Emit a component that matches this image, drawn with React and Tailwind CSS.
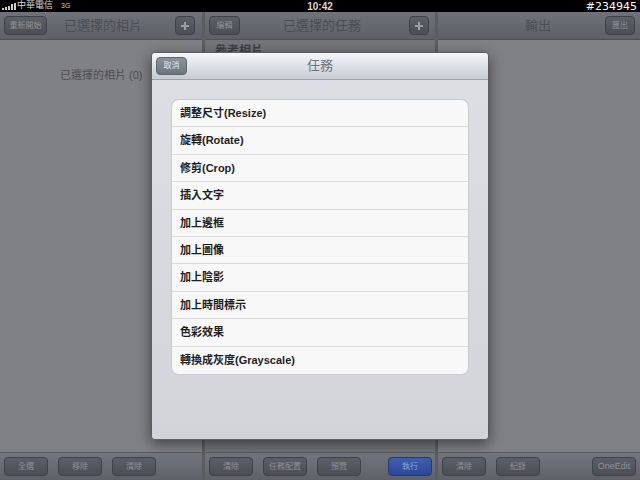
const font = { fontFamily: '"Liberation Sans", "Noto Sans CJK TC", sans-serif' };

function BarButton({ children, className = '', blue = false }) {
  const skin = blue
    ? 'border-[#25397a] bg-gradient-to-b from-[#3f5fb0] to-[#2a4896] text-[#92a3d0]'
    : 'border-[#3f4248] bg-gradient-to-b from-[#5c5f66] to-[#4b4e55] text-[#8e9198]';
  return (
    <div className={'flex h-[19px] items-center justify-center rounded-[4px] border text-[8px] ' + skin + ' ' + className}>
      {children}
    </div>
  );
}

function NavBar({ children }) {
  return (
    <div className="relative flex h-[28px] items-center border-b border-[#4d5056] bg-gradient-to-b from-[#6f7278] to-[#5d6066] px-[4px]">
      {children}
    </div>
  );
}

function ToolBar({ children }) {
  return (
    <div className="flex h-[28px] items-center gap-[10px] border-t border-[#5a5c61] bg-gradient-to-b from-[#73767c] to-[#5e6167] px-[4px]">
      {children}
    </div>
  );
}

function Plus() {
  return (
    <div className="flex h-[19px] w-[20px] items-center justify-center rounded-[4px] border border-[#3f4248] bg-gradient-to-b from-[#5c5f66] to-[#4b4e55]">
      <svg width="10" height="10" viewBox="0 0 10 10">
        <path d="M5 1v8M1 5h8" stroke="#9a9da3" strokeWidth="2" />
      </svg>
    </div>
  );
}

const tasks = [
  '調整尺寸(Resize)',
  '旋轉(Rotate)',
  '修剪(Crop)',
  '插入文字',
  '加上邊框',
  '加上圖像',
  '加上陰影',
  '加上時間標示',
  '色彩效果',
  '轉換成灰度(Grayscale)',
];

export default function App() {
  return (
    <div className="relative flex h-[480px] w-[640px] flex-col overflow-hidden bg-[#7f8084]" style={font}>
      {/* status bar */}
      <div className="relative flex h-[12px] items-center bg-black px-[2px] text-[9px] text-[#d8d8d8]">
        <div className="flex items-end gap-[1px]">
          <div className="h-[2px] w-[2px] bg-[#cfcfcf]" />
          <div className="h-[3px] w-[2px] bg-[#cfcfcf]" />
          <div className="h-[4px] w-[2px] bg-[#cfcfcf]" />
          <div className="h-[6px] w-[2px] bg-[#cfcfcf]" />
          <div className="h-[7px] w-[2px] bg-[#cfcfcf]" />
        </div>
        <span className="ml-[1px]">中華電信</span>
        <span className="ml-[8px] text-[7px] text-[#cfcfcf]">3G</span>
        <span className="absolute left-1/2 -translate-x-1/2 text-[10px] font-bold">10:42</span>
        <span className="absolute right-[3px] top-[-1px] text-[11px] text-white" style={{ fontFamily: '"DejaVu Sans", sans-serif' }}>
          #234945
        </span>
      </div>

      <div className="flex flex-1">
        {/* column 1 */}
        <div className="flex w-[202px] flex-col">
          <NavBar>
            <BarButton className="w-[43px]">重新開始</BarButton>
            <span className="ml-[17px] text-[13px] text-[#4b4e54]">已選擇的相片</span>
            <div className="ml-auto mr-[3px]">
              <Plus />
            </div>
          </NavBar>
          <div className="flex-1 bg-[#808185]">
            <div className="mt-[27px] pl-[60px] text-[11px] text-[#4c4e52]">已選擇的相片 (0)</div>
          </div>
          <ToolBar>
            <BarButton className="w-[44px]">全選</BarButton>
            <BarButton className="w-[44px]">移除</BarButton>
            <BarButton className="w-[44px]">清除</BarButton>
          </ToolBar>
        </div>
        <div className="w-[3px] bg-[#5b5d61]" />

        {/* column 2 */}
        <div className="flex w-[230px] flex-col">
          <NavBar>
            <BarButton className="w-[31px]">編輯</BarButton>
            <span className="absolute left-[78px] text-[13px] text-[#4b4e54]">已選擇的任務</span>
            <div className="ml-auto mr-[2px]">
              <Plus />
            </div>
          </NavBar>
          <div className="flex-1 bg-[#737579]">
            <div className="mt-[2px] pl-[10px] text-[12px] font-bold text-[#3e4044]">參考相片</div>
          </div>
          <ToolBar>
            <BarButton className="w-[44px]">清除</BarButton>
            <BarButton className="w-[44px]">任務配置</BarButton>
            <BarButton className="w-[44px]">預覽</BarButton>
            <BarButton blue className="ml-auto mr-[-1px] w-[44px]">
              執行
            </BarButton>
          </ToolBar>
        </div>
        <div className="w-[3px] bg-[#5b5d61]" />

        {/* column 3 */}
        <div className="flex flex-1 flex-col">
          <NavBar>
            <span className="absolute left-[87px] text-[13px] text-[#4b4e54]">輸出</span>
            <BarButton className="ml-auto mr-[1px] w-[30px]">匯出</BarButton>
          </NavBar>
          <div className="flex-1 bg-[#808185]" />
          <ToolBar>
            <BarButton className="w-[44px]">清除</BarButton>
            <BarButton className="w-[44px]">紀錄</BarButton>
            <BarButton className="ml-auto w-[44px] text-[9px]">OneEdit</BarButton>
          </ToolBar>
        </div>
      </div>

      {/* modal */}
      <div className="absolute left-[151px] top-[52px] flex h-[388px] w-[338px] flex-col overflow-hidden rounded-[4px] border border-[#5c5e63] shadow-[0_4px_14px_rgba(0,0,0,0.5)]">
        <div className="relative flex h-[27px] items-center justify-center border-b border-[#9ea3ab] bg-gradient-to-b from-[#f5f6f8] to-[#c7cbd2]">
          <div className="absolute left-[4px] top-[4px] flex h-[18px] w-[31px] items-center justify-center rounded-[4px] border border-[#5f656e] bg-gradient-to-b from-[#8d939c] to-[#6e747e] text-[8px] text-[#e4e6ea]">
            取消
          </div>
          <span className="text-[13px] text-[#6e7480]">任務</span>
        </div>
        <div className="flex-1 bg-gradient-to-b from-[#dcdee2] to-[#d2d4d9] px-[19px] pt-[19px]">
          <div className="overflow-hidden rounded-[8px] border border-[#c9cbcf] bg-[#f8f8f8]">
            {tasks.map((t, i) => (
              <div
                key={t}
                className={
                  'flex h-[27.4px] items-center pl-[8px] text-[11px] font-bold text-[#1e1e1e] ' +
                  (i < tasks.length - 1 ? 'border-b border-[#dcdcdc]' : '')
                }
              >
                {t}
              </div>
            ))}
          </div>
        </div>
      </div>
    </div>
  );
}
